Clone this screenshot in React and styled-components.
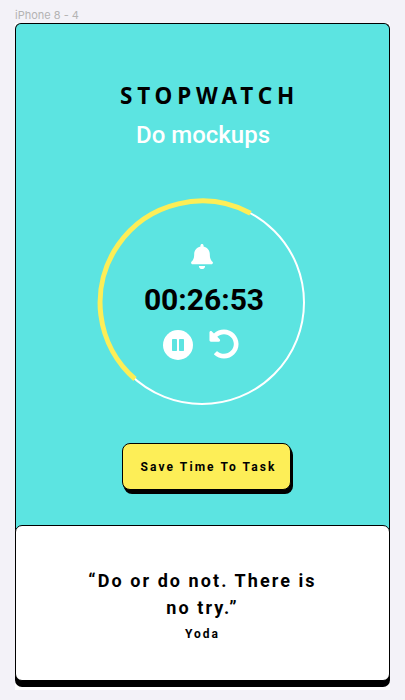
import React from 'react';
import styled, { createGlobalStyle } from 'styled-components';
import { FaBell, FaUndoAlt } from 'react-icons/fa';

const GlobalStyle = createGlobalStyle`
  *, *::before, *::after { box-sizing: border-box; }
  body { margin: 0; background: #f3f2f8; font-family: Roboto, sans-serif; }
`;

const Canvas = styled.div`
  height: 700px;
  padding: 9px 15px 10px;
  display: flex;
  flex-direction: column;
`;

const FrameLabel = styled.div`
  height: 14px;
  line-height: 13px;
  font-family: Inter, sans-serif;
  font-size: 11px;
  color: #b3b3b3;
  white-space: pre;
`;

const Phone = styled.main`
  width: 375px;
  height: 667px;
  background: #fff;
  display: flex;
  flex-direction: column;
`;

const TimerPanel = styled.section`
  height: 513px;
  flex-shrink: 0;
  padding-top: 56px;
  border: 1px solid #000;
  border-bottom: 0;
  border-radius: 6px 6px 0 0;
  background: #5ce4e1;
  display: flex;
  flex-direction: column;
  align-items: center;
`;

const Title = styled.h1`
  margin: 0;
  padding-left: 14px;
  height: 33px;
  font: 700 22.5px/32px 'Noto Sans', sans-serif;
  letter-spacing: 4.8px;
  color: #000;
`;

const Task = styled.p`
  margin: 0;
  padding-left: 1px;
  height: 44px;
  font-size: 24px;
  line-height: 44px;
  font-weight: 500;
  color: #fff;
`;

const Dial = styled.div`
  display: grid;
  width: 210px;
  height: 210px;
  margin: 41px 0 0 -1px;
  > * { grid-area: 1 / 1; }
`;

const Ring = styled.svg`
  display: block;
  width: 210px;
  height: 210px;
`;

const Readout = styled.div`
  display: flex;
  flex-direction: column;
  align-items: center;
  padding-top: 46px;
  color: #fff;
`;

const Bell = styled(FaBell)`
  width: 22px;
  height: 25px;
`;

const Time = styled.time`
  height: 36px;
  margin: 13px 0 0 4px;
  font-size: 30px;
  line-height: 36px;
  font-weight: 700;
  color: #000;
`;

const Controls = styled.div`
  display: flex;
  gap: 16px;
  margin: 11px 2px 0 0;
`;

const IconButton = styled.button`
  width: 30px;
  height: 31px;
  padding: ${(p) => (p.$low ? '1px 0 0' : '0 0 1px')};
  border: 0;
  background: none;
  color: #fff;
  svg { display: block; width: 30px; height: 30px; }
`;

const SaveButton = styled.button`
  width: 169px;
  height: 47px;
  margin: 35px 0 0 8px;
  padding: 0 0 0 4px;
  border: 1px solid #000;
  border-radius: 8px;
  background: #fdee57;
  box-shadow: 1px 2px 0 #000, 2px 4px 0 #000;
  font: 700 12px/16px Roboto, sans-serif;
  letter-spacing: 2.08px;
  color: #000;
  white-space: nowrap;
`;

const QuoteCard = styled.section`
  height: 156px;
  flex-shrink: 0;
  margin-top: -11px;
  padding-top: 41px;
  border: 1px solid #000;
  border-radius: 7px;
  background: #fff;
  box-shadow: 0 3px 0 #000, 0 6px 0 #000;
  text-align: center;
  color: #000;
`;

const Quote = styled.p`
  margin: 0;
  font-size: 18px;
  line-height: 27px;
  font-weight: 700;
  letter-spacing: 2.07px;
`;

const Author = styled.p`
  margin: 4px 0 0;
  font-size: 12px;
  line-height: 18px;
  font-weight: 700;
  letter-spacing: 2px;
`;

export default function App() {
  return (
    <>
      <GlobalStyle />
      <Canvas>
        <FrameLabel>iPhone 8 - 4</FrameLabel>
        <Phone>
          <TimerPanel>
            <Title>STOPWATCH</Title>
            <Task>Do mockups</Task>
            <Dial>
              <Ring viewBox="0 0 210 210" fill="none">
                <ellipse cx="105" cy="104.5" rx="102" ry="101.5" stroke="#fff" strokeWidth="2" />
                <path d="M38 181A102 101.5 0 0 1 153.5 15.2" stroke="#fdee57" strokeWidth="5" />
              </Ring>
              <Readout>
                <Bell />
                <Time>00:26:53</Time>
                <Controls>
                  <IconButton $low aria-label="Pause">
                    <svg viewBox="0 0 30 30">
                      <circle cx="15" cy="15" r="15" fill="#fff" />
                      <rect x="9" y="9" width="5" height="12" rx="0.7" fill="#5ce4e1" />
                      <rect x="16" y="9" width="5" height="12" rx="0.7" fill="#5ce4e1" />
                    </svg>
                  </IconButton>
                  <IconButton aria-label="Reset">
                    <FaUndoAlt />
                  </IconButton>
                </Controls>
              </Readout>
            </Dial>
            <SaveButton>Save Time To Task</SaveButton>
          </TimerPanel>
          <QuoteCard>
            <Quote>“Do or do not. There is<br />no try.”</Quote>
            <Author>Yoda</Author>
          </QuoteCard>
        </Phone>
      </Canvas>
    </>
  );
}
